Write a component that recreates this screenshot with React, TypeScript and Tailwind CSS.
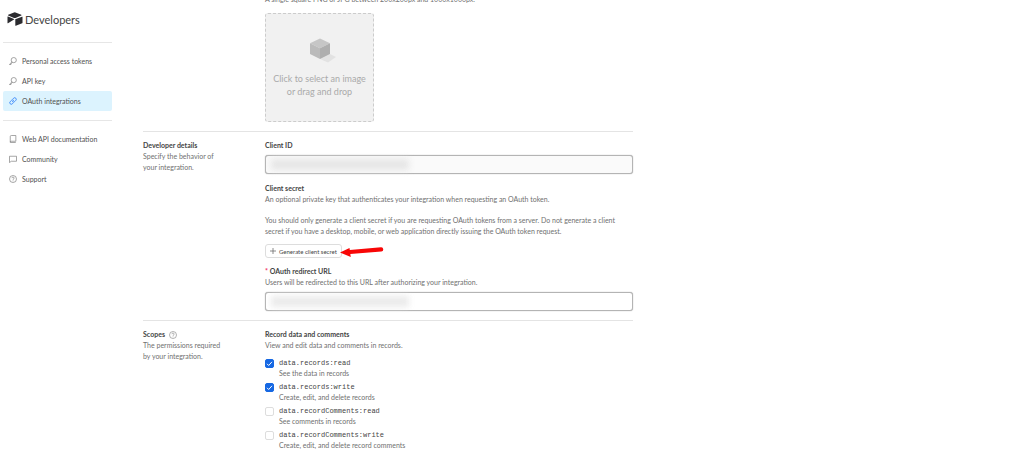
import React, { useState } from 'react';
import type { ReactNode } from 'react';

interface NavItem {
  label: string;
  icon: ReactNode;
  active?: boolean;
}

interface Scope {
  id: string;
  description: string;
  checked: boolean;
}

const KeyIcon = () => (
  <svg viewBox="0 0 16 16" className="size-2 shrink-0" fill="none" stroke="currentColor" strokeWidth="1.3">
    <circle cx="9.5" cy="6.2" r="5.2" />
    <path d="M5.8 9.9 1 14.6v.4h3v-1.6l3-2.6" />
  </svg>
);

const LinkIcon = () => (
  <svg viewBox="0 0 16 16" className="size-2 shrink-0" fill="none" stroke="#2d7ff9" strokeWidth="1.7" strokeLinecap="round">
    <path d="m7.5 4.2 1.8-1.8a3 3 0 0 1 4.3 4.3l-2.6 2.6a3 3 0 0 1-4.3 0" />
    <path d="m8.5 11.8-1.8 1.8a3 3 0 0 1-4.3-4.3L5 6.7a3 3 0 0 1 4.3 0" />
  </svg>
);

const BookIcon = () => (
  <svg viewBox="0 0 16 16" className="size-2 shrink-0" fill="none" stroke="currentColor" strokeWidth="1.3">
    <path d="M2.5 14V3.2A2.2 2.2 0 0 1 4.7 1h9v11.5H4.2A1.7 1.7 0 0 0 2.5 14ZM2.5 14v1h11" />
  </svg>
);

const ChatIcon = () => (
  <svg viewBox="0 0 16 16" className="size-2 shrink-0" fill="none" stroke="currentColor" strokeWidth="1.3">
    <path d="M1 2.5h14v10H4.5L1 15.2Z" />
  </svg>
);

const HelpIcon = () => (
  <svg viewBox="0 0 16 16" className="size-2 shrink-0" fill="none" stroke="currentColor" strokeWidth="1.3">
    <circle cx="8" cy="8" r="7" />
    <path d="M5.8 6.3a2.2 2.2 0 1 1 3 2.1c-.6.3-.8.6-.8 1.3M8 11v1.3" />
  </svg>
);

const accountLinks: NavItem[] = [
  { label: 'Personal access tokens', icon: <KeyIcon /> },
  { label: 'API key', icon: <KeyIcon /> },
  { label: 'OAuth integrations', icon: <LinkIcon />, active: true },
];

const helpLinks: NavItem[] = [
  { label: 'Web API documentation', icon: <BookIcon /> },
  { label: 'Community', icon: <ChatIcon /> },
  { label: 'Support', icon: <HelpIcon /> },
];

const initialScopes: Scope[] = [
  { id: 'data.records:read', description: 'See the data in records', checked: true },
  { id: 'data.records:write', description: 'Create, edit, and delete records', checked: true },
  { id: 'data.recordComments:read', description: 'See comments in records', checked: false },
  { id: 'data.recordComments:write', description: 'Create, edit, and delete record comments', checked: false },
];

const NavList = ({ items }: { items: NavItem[] }) => (
  <ul className="pt-2 pb-[9px]">
    {items.map((item) => (
      <li key={item.label}>
        <a
          href="#"
          className={`flex h-5 items-center gap-[5px] rounded-xs px-1.5 text-[#777] ${item.active ? 'bg-[#dcf3fe]' : ''}`}
        >
          {item.icon}
          <span className="whitespace-nowrap text-[#505050]">{item.label}</span>
        </a>
      </li>
    ))}
  </ul>
);

const Sidebar = () => (
  <aside className="w-28 shrink-0 pl-[3px]">
    <div className="border-b border-[#e6e6e6] pt-3 pb-4">
      <div className="flex items-center gap-0.5 pl-1">
        <svg viewBox="0 0 16 14" className="h-3.5 w-4" fill="#2b2b2f">
          <path d="M7 .5a2 2 0 0 1 1.5 0l5.8 2.3c.4.2.4.6 0 .8L8.5 5.9a2 2 0 0 1-1.5 0L1.2 3.6c-.4-.2-.4-.6 0-.8Z" />
          <path d="M8.3 7.3 15 4.7c.3-.1.5.1.5.4v5.6c0 .3-.1.4-.3.5l-6.4 2.5c-.3.1-.5 0-.5-.3Z" />
          <path d="M.5 4.8c0-.3.2-.4.5-.3l6 2.5c.3.1.3.4 0 .6L1 11.3c-.3.1-.5 0-.5-.3Z" />
        </svg>
        <span className="text-[11px] text-[#444]">Developers</span>
      </div>
    </div>
    <NavList items={accountLinks} />
    <hr className="border-[#e6e6e6]" />
    <NavList items={helpLinks} />
  </aside>
);

interface SectionProps {
  title: string;
  description: string;
  help?: boolean;
  children: ReactNode;
}

const Section = ({ title, description, help, children }: SectionProps) => (
  <section className="flex border-t border-[#e4e4e4] pt-2">
    <div className="w-[122px] shrink-0 pr-10">
      <h2 className="flex items-center gap-1 font-bold text-[#444]">
        {title}
        {help && (
          <span className="text-[#888]">
            <HelpIcon />
          </span>
        )}
      </h2>
      <p>{description}</p>
    </div>
    <div className="min-w-0 flex-1">{children}</div>
  </section>
);

interface MaskedInputProps {
  id: string;
  disabled?: boolean;
}

const MaskedInput = ({ id, disabled }: MaskedInputProps) => (
  <div className="relative mt-1">
    <input
      id={id}
      type="text"
      readOnly
      className={`block h-[19px] w-full rounded-[3px] border border-[#b4b4b4] px-1 shadow-[0_0_1px_#999] ${disabled ? 'bg-[#fafafa]' : 'bg-white'}`}
    />
    <span
      className={`absolute inset-y-1 left-1.5 w-[138px] blur-[3px] ${disabled ? 'bg-[#e6e6e6]' : 'bg-[#ebebeb]'}`}
    />
  </div>
);

const ImageUpload = () => (
  <button
    type="button"
    className="mt-2 flex size-[109px] flex-col items-center rounded-[3px] border border-dashed border-[#ccc] bg-[#f1f1f1] pt-6 text-[9px] leading-[13px] text-[#aaa]"
  >
    <svg viewBox="0 0 28 25" className="ml-1.5 h-[25px] w-7">
      <path d="m11 21 10-5 6 3-8 5.5Z" fill="#e2e2e2" />
      <path d="m11 .5 10 4.7-10 5-10-5Z" fill="#c6c6c6" />
      <path d="m1 5.2 10 5V21L1 16Z" fill="#bbb" />
      <path d="m21 5.2-10 5V21l10-5Z" fill="#aeaeae" />
    </svg>
    <span className="mt-[9px]">
      Click to select an image
      <br />
      or drag and drop
    </span>
  </button>
);

const App = () => {
  const [scopes, setScopes] = useState(initialScopes);

  const toggleScope = (id: string) => {
    setScopes(scopes.map((s) => (s.id === id ? { ...s, checked: !s.checked } : s)));
  };

  return (
    <div className="flex overflow-hidden bg-white font-[Lato,'Open_Sans',sans-serif] text-[7px] leading-[11px] text-[#707070]">
      <Sidebar />
      <main className="ml-[31px] min-w-0 max-w-[490px] flex-1">
        <div className="-mt-1.5 mb-[9px] pl-[122px]">
          <p>A single square PNG or JPG between 200x200px and 1000x1000px.</p>
          <ImageUpload />
        </div>

        <Section title="Developer details" description="Specify the behavior of your integration.">
          <label htmlFor="client-id" className="block font-bold text-[#444]">Client ID</label>
          <MaskedInput id="client-id" disabled />

          <h3 className="mt-[9px] font-bold text-[#444]">Client secret</h3>
          <p>An optional private key that authenticates your integration when requesting an OAuth token.</p>
          <p className="mt-2.5">
            You should only generate a client secret if you are requesting OAuth tokens from a server. Do not generate a client
            secret if you have a desktop, mobile, or web application directly issuing the OAuth token request.
          </p>
          <div className="relative mt-[7px] w-fit">
            <button
              type="button"
              className="flex h-3.5 items-center gap-[3px] rounded-[3px] border border-[#ddd] px-1 text-[6px] text-[#444]"
            >
              <svg viewBox="0 0 8 8" className="size-1.5" stroke="#666" strokeWidth="1">
                <path d="M4 0v8M0 4h8" />
              </svg>
              Generate client secret
            </button>
            <svg viewBox="0 0 44 12" className="absolute top-0.5 -right-[42px] h-3 w-11" fill="#f80606">
              <path d="M0 6.5 9.5 2l.3 2L41 1.300a2 2 0 0 1 .3 4.200L10.300 8l.5 3Z" />
            </svg>
          </div>

          <label htmlFor="redirect-url" className="mt-2 block font-bold text-[#444]">
            <span className="text-[#ef3061]">*</span> OAuth redirect URL
          </label>
          <p>Users will be redirected to this URL after authorizing your integration.</p>
          <MaskedInput id="redirect-url" />
          <div className="h-[9px]" />
        </Section>

        <Section title="Scopes" description="The permissions required by your integration." help>
          <h3 className="font-bold text-[#444]">Record data and comments</h3>
          <p>View and edit data and comments in records.</p>
          <div className="mt-[7px] flex flex-col gap-[3px] pb-2">
            {scopes.map((scope) => (
              <label key={scope.id} className="flex gap-[5px]">
                <span className="relative mt-px size-[9px] shrink-0">
                  <input
                    type="checkbox"
                    checked={scope.checked}
                    onChange={() => toggleScope(scope.id)}
                    className="block size-[9px] appearance-none rounded-xs border border-[#ddd] bg-white checked:border-[#1668e3] checked:bg-[#1668e3]"
                  />
                  {scope.checked && (
                    <svg viewBox="0 0 9 9" className="pointer-events-none absolute inset-0" fill="none" stroke="#fff">
                      <path d="m2 4.8 1.7 1.7L7 2.8" />
                    </svg>
                  )}
                </span>
                <span>
                  <code className="block font-['Liberation_Mono',monospace] leading-[10px] text-[#444]">{scope.id}</code>
                  <span className="block">{scope.description}</span>
                </span>
              </label>
            ))}
          </div>
        </Section>
      </main>
    </div>
  );
};

export default App;
